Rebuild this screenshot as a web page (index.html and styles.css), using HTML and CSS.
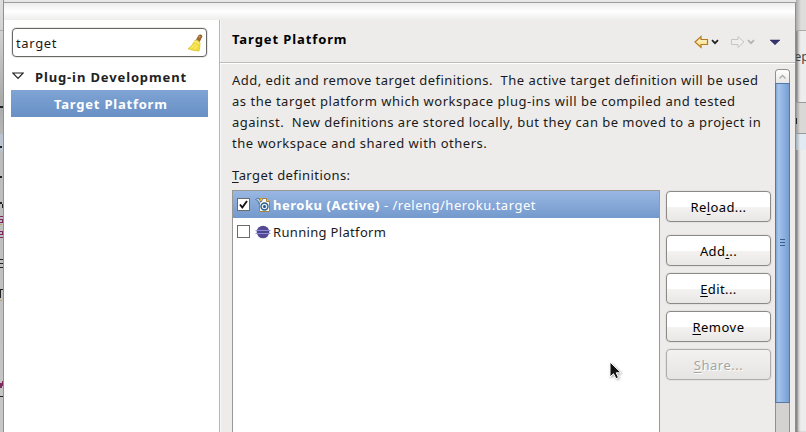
FILE: index.html
```html
<!DOCTYPE html>
<html lang="en">
<head>
<meta charset="utf-8">
<title>Preferences</title>
<link rel="stylesheet" href="styles.css">
</head>
<body>
<div class="desktop">
  <div class="behind behind-left">
    <svg width="4" height="432" shape-rendering="crispEdges">
      <path fill="#aaa" d="M0 30h3v1H0zM0 102h3v1H0z"/>
      <path fill="#bac4d1" d="M0 134h3v17H0z"/>
      <path fill="#222" d="M0 106h3v2H0zM0 146h2v2H0zM0 176h2v2H0zM0 202h2v2H0zM2 204h1v4H2zM0 259h3v1H0zM0 263h3v1H0zM0 267h3v1H0zM0 289h3v1H0zM0 289h1v9H0zM0 396h3v1H0z"/>
      <path fill="#7d2860" d="M0 216h3v1H0zM0 219h3v1H0zM2 219h1v4H2zM0 222h3v1H0zM0 231h3v1H0zM2 231h1v4H2zM0 234h3v1H0zM0 237h3v1H0zM2 381h1v5H2zM0 383h2v5H0z"/>
      <path fill="#c2a653" d="M0 224h2v1H0zM0 300h2v1H0z"/>
    </svg>
  </div>
  <div class="dialog">
    <div class="banner"></div>
    <div class="columns">
      <div class="nav">
        <div class="search">
          <span class="t-search">target</span>
          <svg class="broom" width="16" height="18" viewBox="0 0 16 18">
            <path d="M9.500 5.500 12 1.200q2.500-1 3 1L12.500 7.500z" fill="#a8692b" stroke="#79501f" stroke-width=".7"/>
            <path d="M12.200 3.500l1-1.500" stroke="#e4b57d"/>
            <path d="M8 6q3-.5 5 2.500 0 5-1 8.500L7 16.500 1 14.800Q5.500 12 8 6z" fill="#f1dc38" stroke="#d8bd26" stroke-width=".7"/>
            <path d="M7 7.500q3 0 5.500 2.500M4 14.500l4-4M7.500 15.500l2.500-4" fill="none" stroke="#fff59a"/>
          </svg>
        </div>
        <div class="tree-row">
          <svg class="expander" width="12" height="8" viewBox="0 0 12 8"><path d="M.8 1h10.400L6 6.300z" fill="#fff" stroke="#222" stroke-width="1.200"/></svg>
          <b class="t-plugin">Plug-in Development</b>
        </div>
        <div class="tree-row selected"><b class="t-target">Target Platform</b></div>
      </div>
      <div class="page">
        <div class="page-head">
          <b class="t-title">Target Platform</b>
          <svg class="tools" width="90" height="16" viewBox="0 0 90 16">
            <defs><linearGradient id="gold" x2="0" y2="1"><stop stop-color="#fffbe0"/><stop offset="1" stop-color="#f6d775"/></linearGradient></defs>
            <path d="M1 8 7 2.500v3h6.500v5H7v3z" fill="url(#gold)" stroke="#b87a1c" stroke-width="1.200"/>
            <path d="M18 6.200l3 3 3-3" fill="none" stroke="#222" stroke-width="1.700"/>
            <path d="M50 8 44 2.500v3h-6.500v5H44v3z" fill="#efeeed" stroke="#c6c5c3"/>
            <path d="M54 6.200l3 3 3-3" fill="none" stroke="#b4b3b2" stroke-width="1.700"/>
            <path d="M76 6h10l-5 4.800z" fill="#38356f" stroke="#25234f" stroke-width=".5"/>
          </svg>
        </div>
        <div class="page-body">
          <div class="content">
            <div class="intro">
              <div><span class="l1">Add, edit and remove target definitions.&nbsp; The active target definition will be used</span></div>
              <div><span class="l2">as the target platform which workspace plug-ins will be compiled and tested</span></div>
              <div><span class="l3">against.&nbsp; New definitions are stored locally, but they can be moved to a project in</span></div>
              <div><span class="l4">the workspace and shared with others.</span></div>
            </div>
            <div class="label"><span class="t-label"><u>T</u>arget definitions:</span></div>
            <div class="list-area">
              <div class="list">
                <div class="item active">
                  <span class="check"><svg width="11" height="11" viewBox="0 0 11 11"><path d="M2 5.500 4.300 8.500 9 2" fill="none" stroke="#111" stroke-width="1.900"/></svg></span>
                  <svg class="icon" width="16" height="16" viewBox="0 0 16 16">
                    <path d="M4.500 1.500h7l3 3v10h-10z" fill="#fffdf3" stroke="#a8823c"/>
                    <path d="M11.500 1.500v3h3" fill="#e5c47c" stroke="#a8823c"/>
                    <circle cx="9.500" cy="9.500" r="3.500" fill="#e5f1f8" stroke="#265f91" stroke-width="1.400"/><circle cx="9.500" cy="9.500" r="1.500" fill="#205488"/>
                    <path d="M.5 2.500 3 1l3 3-2 3-1-3zM4 1l2 4 2-3" fill="#b9cde4" stroke="#496f9b" stroke-width=".8"/><path d="M5.500 1v3" stroke="#e5a928"/>
                  </svg>
                  <b class="t-heroku">heroku (Active)</b><span class="t-path">- /releng/heroku.target</span>
                </div>
                <div class="item">
                  <span class="check"></span>
                  <svg class="icon" width="16" height="16" viewBox="0 0 16 16"><circle cx="8" cy="8" r="6.300" fill="#554994"/><path d="M.5 6.500h15M.5 9.500h15" stroke="#8c91d8"/><path d="M2 8h12" stroke="#4b3f88"/></svg>
                  <span class="t-running">Running Platform</span>
                </div>
              </div>
              <div class="buttons">
                <div class="btn first"><span class="b1">Re<u>l</u>oad...</span></div>
                <div class="btn"><span class="b2">Add<u>.</u>..</span></div>
                <div class="btn"><span class="b3"><u>E</u>dit...</span></div>
                <div class="btn"><span class="b4"><u>R</u>emove</span></div>
                <div class="btn disabled"><span class="b5"><u>S</u>hare...</span></div>
              </div>
            </div>
          </div>
          <div class="scroll">
            <div class="scroll-up"><svg width="9" height="6" viewBox="0 0 9 6"><path d="M1.500 4.500l3-3 3 3" fill="none" stroke="#aaa" stroke-width="1.300"/></svg></div>
            <div class="thumb"><svg width="5" height="8" shape-rendering="crispEdges"><path d="M0 0h5v1H0zM0 3h5v1H0zM0 6h5v1H0z" fill="#38608f"/></svg></div>
          </div>
        </div>
      </div>
    </div>
  </div>
  <div class="behind behind-right">
    <div class="r-tool"></div>
    <div class="r-text"><span>ep</span></div>
    <div class="r-tab"><span></span></div>
    <div class="r-line"></div>
  </div>
  <svg class="cursor" width="16" height="22" viewBox="0 0 16 22"><path d="M1 1v15l3.500-3.300 2.500 5 2.500-1.200L7.200 11.800H12z" fill="#111" stroke="#fff"/></svg>
</div>
</body>
</html>
```
FILE: styles.css
```css
* { box-sizing: border-box; }
body { margin: 0; overflow: hidden; font: 13px/21px "Noto Sans", "Open Sans", sans-serif; color: #1a1a1a; }
.desktop { display: grid; grid-template-columns: 4px 792px 10px; width: 806px; height: 432px; position: relative; background: #e7e7e7; overflow: hidden; white-space: nowrap; }
span, b { display: inline-block; }
svg { display: block; flex: none; }
u { text-decoration: underline; text-decoration-thickness: 1px; text-underline-offset: 2px; text-decoration-skip-ink: none; }
.behind { overflow: hidden; }
.behind-left { background: linear-gradient(#dedede 0, #d2d2d2 30px, #aaa 100px, #bcbcbc 150px, #c7c7c7); border-right: 1px solid #91918f; }
.behind-right { background: #ededed; box-shadow: inset 3px 0 3px -1px #777; display: flex; flex-direction: column; }
.r-tool { height: 31px; background: linear-gradient(90deg, #aaa, #dedddc 5px); border-bottom: 1px solid #aaa; }
.r-text { height: 72px; border-bottom: 1px solid #999; padding: 15px 0 0 0; color: #444; }
.r-text span { margin-left: -2px; }
.r-tab { height: 31px; background: linear-gradient(90deg, #999, #d9d8d7 4px); border-bottom: 1px solid #999; padding-top: 15px; }
.r-tab span { display: block; width: 1px; height: 6px; background: #222; }
.r-line { height: 16px; background: linear-gradient(90deg, #a3abb3, #e1e9f2 4px); }
.dialog { margin-top: 2px; height: 430px; border-top: 1px solid #9d9d9b; border-right: 1px solid #8e8e8c; background: #edeceb; display: flex; flex-direction: column; }
.banner { height: 17px; flex: none; background: linear-gradient(#ededed, #fff 50%, #ededec); }
.columns { flex: 1; display: flex; min-height: 0; }
.nav { width: 215px; background: #fff; padding: 8px 0 0 7px; flex: none; }
.search { width: 195px; margin-left: 1px; height: 29px; border: 1px solid #696764; border-radius: 4px; background: #fff; box-shadow: 0 0 0 1px #e9e8e6; display: flex; align-items: center; justify-content: space-between; padding: 0 3px; }
.tree-row { height: 27px; width: 197px; display: flex; align-items: center; color: #222; padding-top: 1px; }
.search + .tree-row { margin-top: 6px; }
.expander { margin: 0 11px 3px 1px; }
.tree-row.selected { background: linear-gradient(#7fa4d5, #6890c5); color: #fff; padding-left: 43px; }
.page { flex: 1; border-left: 1px solid #b7b5b2; box-shadow: inset 1px 0 #f7f7f6; display: flex; flex-direction: column; min-width: 0; }
.page-head { height: 43px; flex: none; display: flex; justify-content: space-between; align-items: center; padding: 0 11px 3px 12px; color: #000; border-bottom: 1px solid #bdbbb8; box-shadow: 0 1px #fff; }
.tools { margin-top: 4px; }
.page-body { display: flex; flex: 1; padding: 6px 5px 0 12px; justify-content: space-between; min-height: 0; }
.content { width: 540px; padding-top: 1px; display: flex; flex-direction: column; }
.label { height: 36px; padding-top: 11px; }
.list-area { flex: 1; display: flex; gap: 6px; }
.list { width: 428px; border: 1px solid #9a9894; border-bottom: 0; background: #fff; }
.item { height: 27px; display: flex; align-items: center; padding: 1px 0 0 4px; }
.active { background: linear-gradient(#99b7e3, #7399cc); color: #fff; }
.check { width: 13px; height: 13px; border: 1px solid #6d6b68; background: #fff; margin-bottom: 2px; flex: none; }
.icon { margin: 0 2px 1px 5px; }
.t-path { margin-left: 4px; }
.buttons { width: 106px; display: flex; flex-direction: column; gap: 7px; flex: none; }
.btn { width: 105px; height: 31px; border: 1px solid #8c8a87; border-radius: 4px; background: linear-gradient(#fff 50%, #f4f3f2 51%, #e8e7e6); display: flex; align-items: center; justify-content: center; color: #000; box-shadow: 0 0 0 1px #e3e2e0; padding-top: 1px; }
.first { margin: 1px 0 6px; }
.disabled { color: #a5a4a2; text-shadow: 1px 1px #fff; background: linear-gradient(#f3f2f1, #e5e4e3); border-color: #afadab; }
.scroll { width: 15px; background: #d3d2d0; border: 1px solid #92908d; border-bottom: 0; border-radius: 4px 4px 0 0; overflow: hidden; }
.scroll-up { height: 13px; display: flex; justify-content: center; align-items: center; background: linear-gradient(#fff, #e8e7e6); }
.thumb { height: 320px; margin: 0 -1px; border: 1px solid #5379a9; background: linear-gradient(90deg, #85a7d2, #a6c3ec 20%, #8bb0e2 60%, #7a9dce); display: flex; justify-content: center; align-items: center; }
.scroll { overflow: visible; }
.scroll-up { border-radius: 3px 3px 0 0; }
.cursor { position: absolute; left: 609px; top: 361px; filter: drop-shadow(1px 1px 1px #0005); }

.t-search { letter-spacing: .65px; margin-top: 2px; }
.t-plugin { letter-spacing: .87px; }
.t-target { letter-spacing: .78px; }
.t-title { letter-spacing: .9px; }
.l1 { letter-spacing: .45px; }
.l2 { letter-spacing: .51px; }
.l3 { letter-spacing: .465px; }
.l4 { letter-spacing: .49px; }
.t-label { letter-spacing: .43px; }
.t-heroku { letter-spacing: .53px; }
.t-path { letter-spacing: .5px; }
.t-running { letter-spacing: .33px; }
.b1, .b2, .b3 { letter-spacing: .4px; }
.b4, .b5 { letter-spacing: .5px; }
```
